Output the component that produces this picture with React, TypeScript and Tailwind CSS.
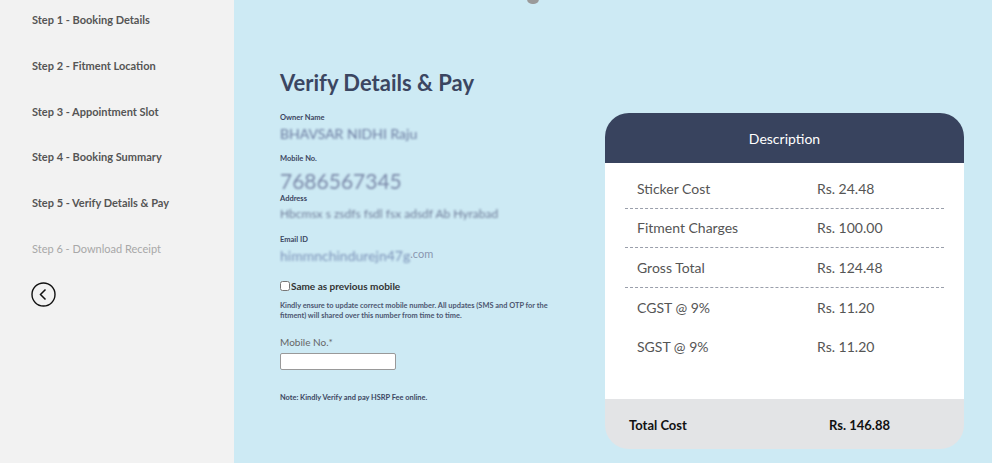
import React from "react"

const steps = [
  "Step 1 - Booking Details",
  "Step 2 - Fitment Location",
  "Step 3 - Appointment Slot",
  "Step 4 - Booking Summary",
  "Step 5 - Verify Details & Pay",
]

const rows = [
  { label: "Sticker Cost", value: "Rs. 24.48", line: true },
  { label: "Fitment Charges", value: "Rs. 100.00", line: true },
  { label: "Gross Total", value: "Rs. 124.48", line: true },
  { label: "CGST @ 9%", value: "Rs. 11.20", line: false },
  { label: "SGST @ 9%", value: "Rs. 11.20", line: false },
]

export default function App() {
  return (
    <div
      className="relative flex h-[463px] w-[992px] overflow-hidden bg-[#cdeaf4]"
      style={{ fontFamily: "Lato, 'Open Sans', sans-serif" }}
    >
      {/* Sidebar */}
      <div className="flex w-[234px] shrink-0 flex-col bg-[#f2f2f2] pl-[32px] pt-[13px]">
        {steps.map((s) => (
          <div key={s} className="h-[45.75px] text-[11px] font-bold leading-[14px] text-[#555555]">
            {s}
          </div>
        ))}
        <div className="h-[40px] text-[11px] leading-[14px] text-[#a8a8a8]">Step 6 - Download Receipt</div>
        <svg width="25" height="25" viewBox="0 0 25 25" className="-ml-[1px]">
          <circle cx="12.5" cy="12.5" r="11.5" fill="none" stroke="#111" strokeWidth="1.4" />
          <path d="M14.5 7.5 L9.5 12.5 L14.5 17.5" fill="none" stroke="#111" strokeWidth="1.5" />
        </svg>
      </div>

      {/* top spinner remnant */}
      <div className="absolute left-[527px] top-[-6px] h-[10px] w-[12px] rounded-full bg-[#9a9a9a]" />

      {/* Main */}
      <div className="flex flex-1 pl-[46px] pr-[28px]">
        <div className="flex w-[325px] flex-col pt-[69px] text-[#3b4661]">
          <h1 className="text-[22px] font-bold leading-[28px]">Verify Details &amp; Pay</h1>

          <div className="mt-[16px] text-[7.5px] font-bold leading-[10px]">Owner Name</div>
          <div className="mt-[2px] text-[14px] leading-[18px] text-[#6b7ba0] blur-[0.8px]">BHAVSAR NIDHI Raju</div>

          <div className="mt-[11px] text-[7.5px] font-bold leading-[10px]">Mobile No.</div>
          <div className="mt-[5px] text-[21px] leading-[24px] text-[#7a88a8] blur-[0.9px]">7686567345</div>

          <div className="mt-[1px] text-[7.5px] font-bold leading-[10px]">Address</div>
          <div className="mt-[1px] text-[12px] leading-[18px] text-[#6f7c99] blur-[1px]">
            Hbcmsx s zsdfs fsdl fsx adsdf Ab Hyrabad
          </div>

          <div className="mt-[12px] text-[7.5px] font-bold leading-[10px]">Email ID</div>
          <div className="mt-[2px] text-[14px] leading-[18px] text-[#7b92b8]">
            <span className="blur-[0.8px]">himmnchindurejn47g</span>
            <span className="relative -top-[3px] text-[11px] text-[#8a97b0]">.com</span>
          </div>

          <label className="mt-[14px] flex items-center text-[10px] font-bold leading-[12px] text-[#333333]">
            <input type="checkbox" className="m-0 h-[10px] w-[10px]" />
            <span className="ml-[1px]">Same as previous mobile</span>
          </label>

          <p className="mt-[9px] w-[276px] text-[7.4px] font-bold leading-[10px] text-[#4c5670]">
            Kindly ensure to update correct mobile number. All updates (SMS and OTP for the fitment) will shared over
            this number from time to time.
          </p>

          <div className="mt-[14px] text-[10px] leading-[14px] text-[#666666]">Mobile No.*</div>
          <input
            type="text"
            className="mt-[4px] h-[17px] w-[116px] rounded-[2px] border border-[#999999] bg-white"
          />

          <div className="mt-[23px] text-[7.4px] font-bold leading-[10px] text-[#3b4661]">
            Note: Kindly Verify and pay HSRP Fee online.
          </div>
        </div>

        <div className="ml-auto mt-[113px] flex h-[336px] w-[359px] flex-col">
          <div className="flex h-[50px] items-center justify-center rounded-t-[24px] bg-[#38435e] text-[14px] text-white">
            Description
          </div>
          <div className="flex-1 bg-white px-[20px] pt-[6px]">
            {rows.map((r) => (
              <div
                key={r.label}
                className={`flex h-[39.5px] items-center text-[14px] text-[#555555] ${
                  r.line ? "border-b border-dashed border-[#9a9fab]" : ""
                }`}
              >
                <div className="w-[192px] pl-[12px]">{r.label}</div>
                <div>{r.value}</div>
              </div>
            ))}
          </div>
          <div className="flex h-[50px] items-center rounded-b-[24px] bg-[#e3e4e6] pt-[3px] text-[13px] font-bold text-[#111111]">
            <div className="w-[224px] pl-[24px]">Total Cost</div>
            <div>Rs. 146.88</div>
          </div>
        </div>
      </div>
    </div>
  )
}
